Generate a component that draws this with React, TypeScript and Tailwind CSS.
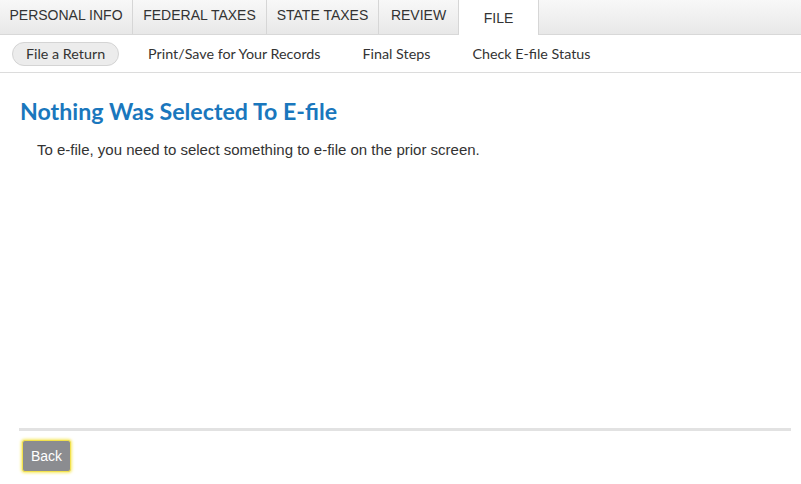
import React from "react";

const tabs = [
  { label: "PERSONAL INFO", w: "w-[133px]" },
  { label: "FEDERAL TAXES", w: "w-[134px]" },
  { label: "STATE TAXES", w: "w-[112px]" },
  { label: "REVIEW", w: "w-[80px]" },
];

export default function App() {
  return (
    <div className="w-[801px] h-[484px] bg-white flex flex-col overflow-hidden" style={{ fontFamily: '"Liberation Sans", Arial, sans-serif' }}>
      <div className="flex h-[35px] bg-gradient-to-b from-[#f8f8f8] to-[#e8e8e8] border-b border-[#d8d8d8]">
        {tabs.map((t) => (
          <div key={t.label} className={`${t.w} border-r border-[#d6d6d6] flex items-center justify-center text-[14px] text-[#333] pb-[3px]`}>
            {t.label}
          </div>
        ))}
        <div className="w-[80px] bg-white border-r border-[#d6d6d6] -mb-px flex items-center justify-center text-[14px] text-[#333] pt-[1px]">
          FILE
        </div>
        <div className="flex-1" />
      </div>
      <div className="h-[38px] flex items-center border-b border-[#dcdcdc] pl-[12px] text-[14.3px] text-[#333]" style={{ fontFamily: 'Lato, "Open Sans", sans-serif' }}>
        <div className="h-[24px] px-[13px] rounded-full bg-[#ececec] border border-[#d4d4d4] flex items-center">File a Return</div>
        <div className="ml-[29px]">Print/Save for Your Records</div>
        <div className="ml-[42px]">Final Steps</div>
        <div className="ml-[42px]">Check E-file Status</div>
      </div>
      <div className="flex-1 px-[20px] flex flex-col">
        <h1 className="mt-[23px] text-[23.2px] font-bold text-[#1a77bd] leading-[30px]" style={{ fontFamily: 'Lato, "Open Sans", sans-serif' }}>
          Nothing Was Selected To E-file
        </h1>
        <p className="mt-[15px] ml-[17px] text-[15px] leading-[18px] text-[#333]">To e-file, you need to select something to e-file on the prior screen.</p>
        <div className="flex-1" />
        <div className="h-[3px] bg-[#e2e2e2] -mr-[10px] -ml-[1px]" />
        <div className="mt-[9px] mb-[12px]">
          <button className="ml-[2px] h-[32px] px-[8px] rounded-[3px] bg-[#8b8c90] text-white text-[14px] border border-[#f2e14c] shadow-[0_0_3px_1px_#f7ea6a]">
            Back
          </button>
        </div>
      </div>
    </div>
  );
}
